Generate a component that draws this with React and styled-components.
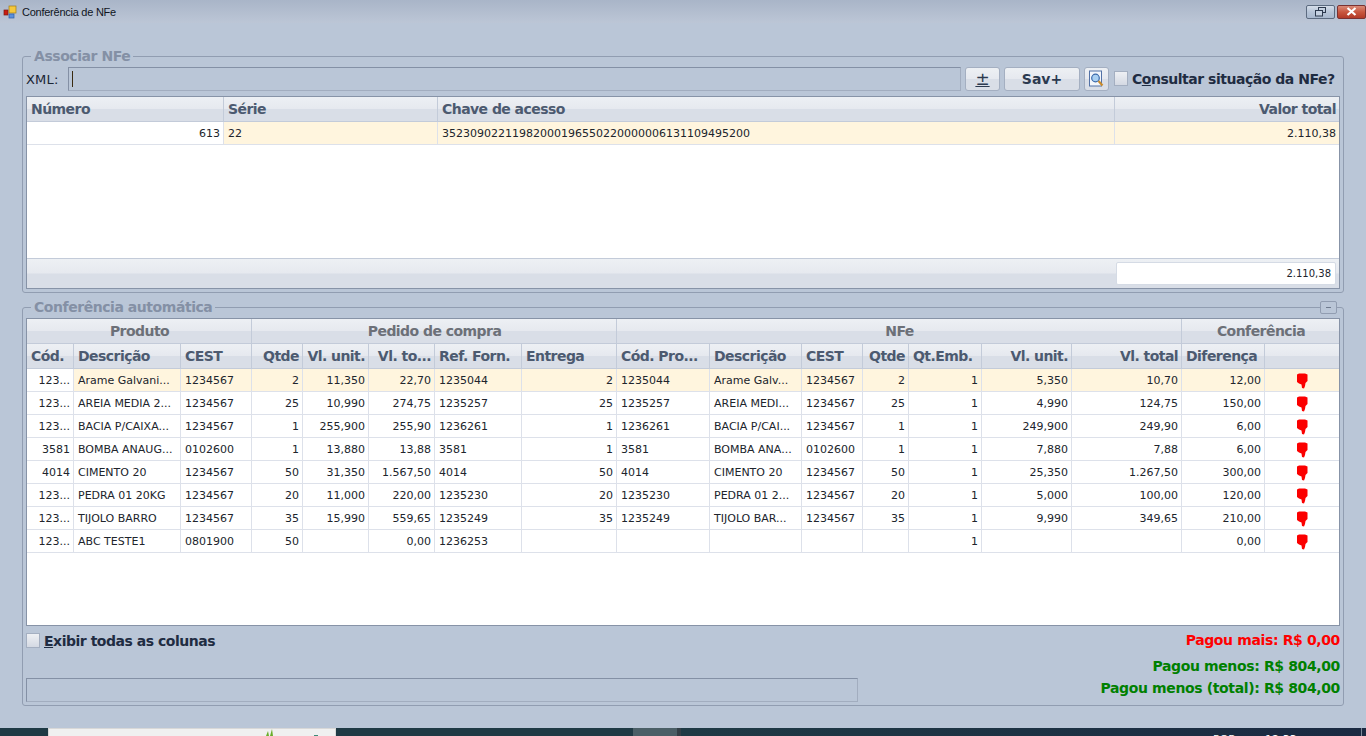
import React from "react"
import styled, { createGlobalStyle } from "styled-components"

const GlobalStyle = createGlobalStyle`
	html, body {
		margin: 0;
		padding: 0;
		height: 100%;
		overflow: hidden;
		background: #bac6d7;
		font-family: "DejaVu Sans", Verdana, sans-serif;
	}
	* {
		box-sizing: border-box;
	}
`

const headGradient = "linear-gradient(#edf0f4 0%, #e6e9ef 48%, #d9dee7 52%, #d9dee7 100%)"

const Window = styled.div`
	width: 1366px;
	height: 736px;
	display: flex;
	flex-direction: column;
	overflow: hidden;
`

const TitleBar = styled.div`
	height: 23px;
	flex: none;
	display: flex;
	align-items: center;
	padding: 0 0 0 3px;
	background: linear-gradient(#a9b5c8, #bcc6d6);
`

const TitleText = styled.span`
	margin-left: 3px;
	font-family: "Liberation Sans", Arial, sans-serif;
	font-size: 11px;
	letter-spacing: -0.25px;
	color: #10151d;
	flex: 1;
`

const WindowButton = styled.div`
	width: 29px;
	height: 14px;
	margin-left: 2px;
	border-radius: 2px;
	border: 1px solid ${(p) => (p.$close ? "#7a3232" : "#5c6b80")};
	background: ${(p) =>
		p.$close ? "linear-gradient(#d98a78 0%, #c9573f 50%, #b23a28 100%)" : "linear-gradient(#d5deea 0%, #b6c4d7 50%, #a9b9cf 100%)"};
	display: flex;
	align-items: center;
	justify-content: center;
`

const Content = styled.div`
	flex: 1;
	display: flex;
	flex-direction: column;
	gap: 4px;
	padding: 23px 22px 0;
`

const Group = styled.fieldset`
	position: relative;
	margin: 0;
	padding: 0 3px;
	min-width: 0;
	border: 1px solid #919db1;
	border-radius: 3px;
	height: ${(p) => p.$height}px;
`

const Legend = styled.legend`
	margin-left: 5px;
	padding: 0 3px 0 3px;
	height: 20px;
	line-height: 20px;
	font-size: 14px;
	font-weight: bold;
	letter-spacing: -0.45px;
	color: #8490a5;
`

const CollapseButton = styled.div`
	position: absolute;
	top: -16px;
	right: 6px;
	width: 17px;
	height: 13px;
	border: 1px solid #919db1;
	border-radius: 2px;
	background: #bac6d7;
	display: flex;
	align-items: center;
	justify-content: center;
	&::before {
		content: "";
		width: 5px;
		height: 1px;
		background: #6e7a8e;
	}
`

const XmlRow = styled.div`
	height: 24px;
	display: flex;
	align-items: center;
	margin-top: 1px;
	margin-bottom: 5px;
`

const XmlLabel = styled.span`
	width: 42px;
	flex: none;
	font-size: 13px;
	color: #1a2533;
	letter-spacing: 0.2px;
`

const XmlInput = styled.div`
	width: 893px;
	height: 24px;
	flex: none;
	border: 1px solid #a2adbf;
	border-top-color: #8490a5;
	border-left-color: #8490a5;
	padding: 3px 3px;
	&::before {
		content: "";
		display: block;
		width: 1px;
		height: 16px;
		background: #3a2a10;
	}
`

const ToolButton = styled.button`
	width: ${(p) => p.$width}px;
	height: 24px;
	flex: none;
	margin-left: ${(p) => p.$gap}px;
	padding: 0;
	border: 1px solid #a4afc1;
	border-radius: 3px;
	background: ${headGradient};
	font-family: inherit;
	font-size: ${(p) => p.$size || 14}px;
	font-weight: ${(p) => (p.$plain ? "normal" : "bold")};
	color: #2c3a50;
	display: flex;
	align-items: center;
	justify-content: center;
`

const Check = styled.span`
	width: 14px;
	height: 15px;
	flex: none;
	margin-top: -2px;
	border: 1px solid #a4afc1;
	background: linear-gradient(#eef0f4, #d4d9e3);
`

const CheckRow = styled.label`
	display: flex;
	align-items: center;
	gap: 4px;
	flex: none;
	white-space: nowrap;
	font-size: 14px;
	font-weight: bold;
	letter-spacing: -0.48px;
	color: #1f2c42;
	margin-left: ${(p) => p.$gap || 0}px;
`

const Underlined = styled.span`
	text-decoration: underline;
`

const Grid = styled.div`
	height: ${(p) => p.$height}px;
	margin-top: ${(p) => p.$top || 0}px;
	border: 1px solid #8793a7;
	background: #fff;
	display: flex;
	flex-direction: column;
`

const Table = styled.table`
	border-collapse: separate;
	border-spacing: 0;
	table-layout: fixed;
	width: 100%;
`

const HeadCell = styled.th`
	height: 25px;
	padding: 0 3px 0 4px;
	background: ${headGradient};
	border-right: 1px solid #c3cbd9;
	border-bottom: 1px solid #c3cbd9;
	font-size: 14px;
	font-weight: bold;
	letter-spacing: -0.55px;
	white-space: nowrap;
	overflow: hidden;
	color: ${(p) => (p.$band ? "#6c7078" : "#4c5a70")};
	text-align: ${(p) => (p.$band ? "center" : p.$right ? "right" : "left")};
	&:last-child {
		border-right: 0;
	}
`

const Cell = styled.td`
	height: 23px;
	padding: 0 3px 0 4px;
	font-size: 11px;
	color: #20242c;
	white-space: nowrap;
	overflow: hidden;
	text-align: ${(p) => (p.$right ? "right" : "left")};
	background: ${(p) => (p.$active ? "#fff5de" : "#fff")};
	border-right: 1px solid #dde1ea;
	border-bottom: 1px solid #dde1ea;
	&:last-child {
		border-right: 0;
	}
`

const Spacer = styled.div`
	flex: 1;
`

const GridFooter = styled.div`
	height: 30px;
	flex: none;
	display: flex;
	justify-content: flex-end;
	align-items: center;
	padding-right: 3px;
	background: ${headGradient};
	border-top: 1px solid #c3cbd9;
`

const TotalBox = styled.div`
	width: 220px;
	height: 23px;
	line-height: 21px;
	padding-right: 4px;
	border: 1px solid #d5dbe5;
	border-radius: 2px;
	background: #fff;
	font-size: 10px;
	color: #20242c;
	text-align: right;
`

const ThumbCell = styled.div`
	display: flex;
	justify-content: center;
	padding: 1px 1px 0 0;
`

const Bottom = styled.div`
	display: flex;
	justify-content: space-between;
	height: 80px;
`

const BottomLeft = styled.div`
	display: flex;
	flex-direction: column;
	padding-top: 7px;
`

const ProgressBox = styled.div`
	width: 832px;
	height: 24px;
	margin-top: 29px;
	border: 1px solid #a2adbf;
	border-top-color: #8490a5;
	border-left-color: #8490a5;
`

const Totals = styled.div`
	display: flex;
	flex-direction: column;
	align-items: flex-end;
`

const TotalLine = styled.div`
	font-size: 14px;
	font-weight: bold;
	letter-spacing: -0.37px;
	line-height: 22px;
	margin-top: ${(p) => p.$top}px;
	color: ${(p) => (p.$red ? "#ff0000" : "#008000")};
`

const Taskbar = styled.div`
	height: 8px;
	flex: none;
	position: relative;
	background: linear-gradient(90deg, #1f3a45 0%, #1f3a45 50%, #1b2a42 100%);
	display: flex;
	overflow: hidden;
`

const TaskTile = styled.div`
	width: 288px;
	height: 8px;
	margin-left: 48px;
	background: #f0f0f0;
	border: 1px solid #d8d8d8;
	border-bottom: 0;
	padding-left: 216px;
	display: flex;
`

const TaskActive = styled.div`
	width: 48px;
	margin-left: 297px;
	background: #4b5f67;
	border-right: 4px solid #333f47;
`

const TaskClock = styled.div`
	position: absolute;
	top: 5px;
	left: ${(p) => p.$left}px;
	font-size: 11px;
	line-height: 14px;
	color: #fff;
`

const TaskEdge = styled.div`
	position: absolute;
	top: 0;
	bottom: 0;
	left: 1361px;
	width: 1px;
	background: #7d8a99;
`

const numberCols = [197, 214, 677, 224]
const productCols = [47, 107, 71, 51, 66, 66, 87, 95, 93, 92, 61, 46, 73, 90, 110, 83, 74]

const rows = [
	["123...", "Arame Galvani...", "1234567", "2", "11,350", "22,70", "1235044", "2", "1235044", "Arame Galv...", "1234567", "2", "1", "5,350", "10,70", "12,00"],
	["123...", "AREIA MEDIA 2...", "1234567", "25", "10,990", "274,75", "1235257", "25", "1235257", "AREIA MEDI...", "1234567", "25", "1", "4,990", "124,75", "150,00"],
	["123...", "BACIA P/CAIXA...", "1234567", "1", "255,900", "255,90", "1236261", "1", "1236261", "BACIA P/CAI...", "1234567", "1", "1", "249,900", "249,90", "6,00"],
	["3581", "BOMBA ANAUG...", "0102600", "1", "13,880", "13,88", "3581", "1", "3581", "BOMBA ANA...", "0102600", "1", "1", "7,880", "7,88", "6,00"],
	["4014", "CIMENTO 20", "1234567", "50", "31,350", "1.567,50", "4014", "50", "4014", "CIMENTO 20", "1234567", "50", "1", "25,350", "1.267,50", "300,00"],
	["123...", "PEDRA 01 20KG", "1234567", "20", "11,000", "220,00", "1235230", "20", "1235230", "PEDRA 01 2...", "1234567", "20", "1", "5,000", "100,00", "120,00"],
	["123...", "TIJOLO BARRO", "1234567", "35", "15,990", "559,65", "1235249", "35", "1235249", "TIJOLO BAR...", "1234567", "35", "1", "9,990", "349,65", "210,00"],
	["123...", "ABC TESTE1", "0801900", "50", "", "0,00", "1236253", "", "", "", "", "", "1", "", "", "0,00"],
]

const rightCols = [0, 3, 4, 5, 7, 11, 12, 13, 14, 15]

const columns = [
	["Cód.", false],
	["Descrição", false],
	["CEST", false],
	["Qtde", true],
	["Vl. unit.", true],
	["Vl. to...", true],
	["Ref. Forn.", false],
	["Entrega", false],
	["Cód. Pro...", false],
	["Descrição", false],
	["CEST", false],
	["Qtde", true],
	["Qt.Emb.", false],
	["Vl. unit.", true],
	["Vl. total", true],
	["Diferença", false],
	["", false],
]

function ThumbDown() {
	return (
		<svg width="12" height="16" viewBox="0 0 12 16">
			<path
				d="M1 1.5 L3 0.5 L9 0.5 L11.5 1.5 L11.5 8 L9.5 10 L9 13 L8 15.5 L6 15 L5.5 11.5 L3 10.5 L1 9 Z"
				fill="#fb0000"
			/>
		</svg>
	)
}

function AppIcon() {
	return (
		<svg width="16" height="16" viewBox="0 0 16 16">
			<rect x="1" y="6" width="4" height="5" fill="#c91d12" stroke="#7d1a12" strokeWidth="0.7" />
			<rect x="6" y="2" width="7" height="7" fill="#f5c83c" stroke="#a17b16" strokeWidth="0.7" />
			<rect x="6" y="10" width="5" height="4" fill="#5b90dd" stroke="#2f5ea3" strokeWidth="0.7" />
		</svg>
	)
}

function RestoreIcon() {
	return (
		<svg width="13" height="10" viewBox="0 0 13 10" fill="none" stroke="#2d3a4e">
			<rect x="4.5" y="0.5" width="7" height="5" />
			<rect x="1.5" y="3.5" width="7" height="5.5" fill="#c5d1e1" />
		</svg>
	)
}

function CloseIcon() {
	return (
		<svg width="13" height="9" viewBox="0 0 13 9" stroke="#fff" strokeWidth="2.2">
			<path d="M2.5 1 L10.5 8 M10.5 1 L2.5 8" />
		</svg>
	)
}

function SearchIcon() {
	return (
		<svg width="17" height="18" viewBox="0 0 17 18" fill="none">
			<rect x="1.5" y="1" width="12" height="15" fill="#f3f6fb" stroke="#5372a6" />
			<circle cx="7.5" cy="8" r="3.8" fill="#a9d0f2" stroke="#3a68a8" strokeWidth="1.2" />
			<path d="M10.5 11 L14.5 15.5" stroke="#c98a2b" strokeWidth="2.2" />
		</svg>
	)
}

function LeafIcon() {
	return (
		<svg width="60" height="7" viewBox="0 0 60 7">
			<path d="M1 7 L3 2 L4 7 Z M5 7 L7 0 L8 7 Z" fill="#6aae2a" />
			<rect x="49" y="6" width="4" height="1" fill="#3f8a78" />
		</svg>
	)
}

export default function App() {
	return (
		<Window>
			<GlobalStyle />
			<TitleBar>
				<AppIcon />
				<TitleText>Conferência de NFe</TitleText>
				<WindowButton>
					<RestoreIcon />
				</WindowButton>
				<WindowButton $close>
					<CloseIcon />
				</WindowButton>
			</TitleBar>
			<Content>
				<Group $height={247}>
					<Legend>Associar NFe</Legend>
					<XmlRow>
						<XmlLabel>XML:</XmlLabel>
						<XmlInput />
						<ToolButton $width={35} $gap={4} $size={17} $plain>
							<Underlined>±</Underlined>
						</ToolButton>
						<ToolButton $width={76} $gap={4}>
							Sav+
						</ToolButton>
						<ToolButton $width={25} $gap={4}>
							<SearchIcon />
						</ToolButton>
						<CheckRow $gap={5}>
							<Check />
							<span>
								C<Underlined>o</Underlined>nsultar situação da NFe?
							</span>
						</CheckRow>
					</XmlRow>
					<Grid $height={193}>
						<Table>
							<colgroup>
								{numberCols.map((w, i) => (
									<col key={i} width={w} />
								))}
							</colgroup>
							<thead>
								<tr>
									<HeadCell>Número</HeadCell>
									<HeadCell>Série</HeadCell>
									<HeadCell>Chave de acesso</HeadCell>
									<HeadCell $right>Valor total</HeadCell>
								</tr>
							</thead>
							<tbody>
								<tr>
									<Cell $right>613</Cell>
									<Cell $active>22</Cell>
									<Cell $active>35230902211982000196550220000006131109495200</Cell>
									<Cell $active $right>
										2.110,38
									</Cell>
								</tr>
							</tbody>
						</Table>
						<Spacer />
						<GridFooter>
							<TotalBox>2.110,38</TotalBox>
						</GridFooter>
					</Grid>
				</Group>
				<Group $height={409}>
					<Legend>Conferência automática</Legend>
					<CollapseButton />
					<Grid $height={308} $top={1}>
						<Table>
							<colgroup>
								{productCols.map((w, i) => (
									<col key={i} width={w} />
								))}
							</colgroup>
							<thead>
								<tr>
									<HeadCell $band colSpan={3}>
										Produto
									</HeadCell>
									<HeadCell $band colSpan={5}>
										Pedido de compra
									</HeadCell>
									<HeadCell $band colSpan={7}>
										NFe
									</HeadCell>
									<HeadCell $band colSpan={2}>
										Conferência
									</HeadCell>
								</tr>
								<tr>
									{columns.map(([label, right], i) => (
										<HeadCell key={i} $right={right}>
											{label}
										</HeadCell>
									))}
								</tr>
							</thead>
							<tbody>
								{rows.map((row, r) => (
									<tr key={r}>
										{row.map((text, c) => (
											<Cell key={c} $right={rightCols.includes(c)} $active={r === 0 && c > 0}>
												{text}
											</Cell>
										))}
										<Cell $active={r === 0}>
											<ThumbCell>
												<ThumbDown />
											</ThumbCell>
										</Cell>
									</tr>
								))}
							</tbody>
						</Table>
					</Grid>
					<Bottom>
						<BottomLeft>
							<CheckRow>
								<Check />
								<span>
									<Underlined>E</Underlined>xibir todas as colunas
								</span>
							</CheckRow>
							<ProgressBox />
						</BottomLeft>
						<Totals>
							<TotalLine $red $top={3}>
								Pagou mais: R$ 0,00
							</TotalLine>
							<TotalLine $top={4}>Pagou menos: R$ 804,00</TotalLine>
							<TotalLine $top={0}>Pagou menos (total): R$ 804,00</TotalLine>
						</Totals>
					</Bottom>
				</Group>
			</Content>
			<Taskbar>
				<TaskTile>
					<LeafIcon />
				</TaskTile>
				<TaskActive />
				<TaskClock $left={1213}>POR</TaskClock>
				<TaskClock $left={1265}>12:33</TaskClock>
				<TaskEdge />
			</Taskbar>
		</Window>
	)
}
